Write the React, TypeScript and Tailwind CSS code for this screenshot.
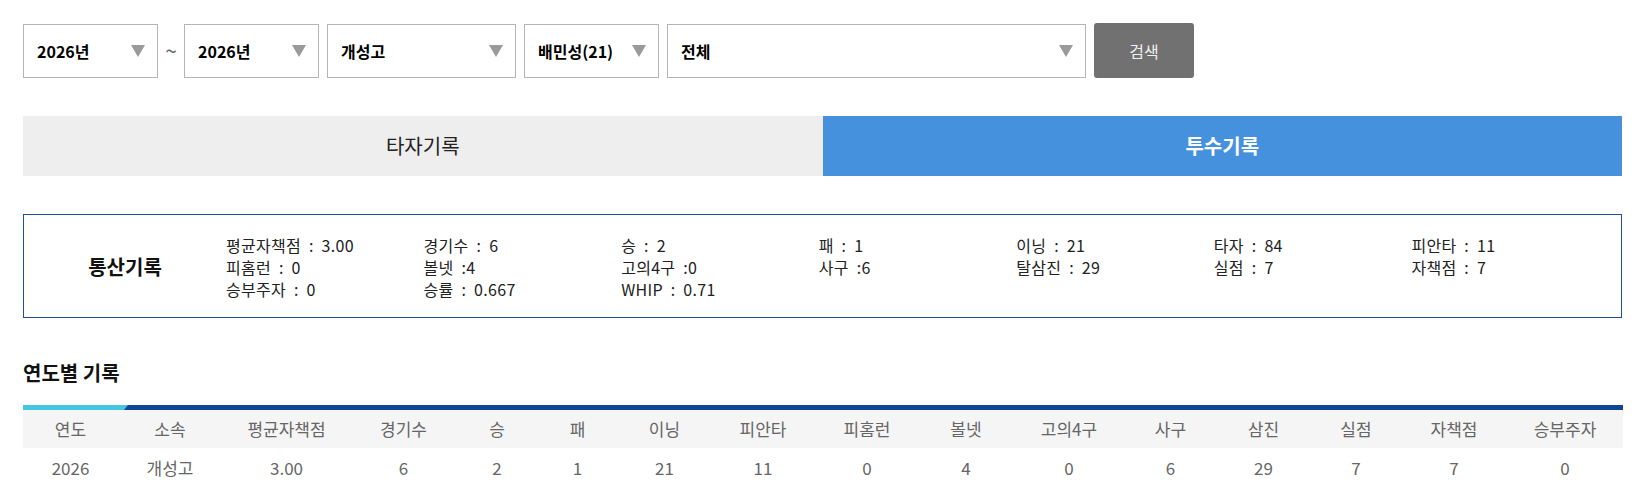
import React from "react";

const font = "font-['Malgun_Gothic','Noto_Sans_CJK_KR',sans-serif]";

const summary = [
  "평균자책점 : 3.00",
  "경기수 : 6",
  "승 : 2",
  "패 : 1",
  "이닝 : 21",
  "타자 : 84",
  "피안타 : 11",
  "피홈런 : 0",
  "볼넷 :4",
  "고의4구 :0",
  "사구 :6",
  "탈삼진 : 29",
  "실점 : 7",
  "자책점 : 7",
  "승부주자 : 0",
  "승률 : 0.667",
  "WHIP : 0.71",
];

const headers = [
  "연도",
  "소속",
  "평균자책점",
  "경기수",
  "승",
  "패",
  "이닝",
  "피안타",
  "피홈런",
  "볼넷",
  "고의4구",
  "사구",
  "삼진",
  "실점",
  "자책점",
  "승부주자",
];

const rows = [["2026", "개성고", "3.00", "6", "2", "1", "21", "11", "0", "4", "0", "6", "29", "7", "7", "0"]];

const cols =
  "grid grid-cols-[95px_104px_129px_105px_82px_79px_95px_102px_106px_92px_114px_89px_97px_88px_108px_114px]";

const Caret = () => (
  <svg width="14" height="12" viewBox="0 0 14 12" className="shrink-0">
    <polygon points="0,0 14,0 7,12" fill="#9a9a9a" />
  </svg>
);

const Select = ({ label, width }: { label: string; width: string }) => (
  <div
    className={`${width} h-[54px] flex items-center justify-between border border-[#b5b5b5] bg-white pl-[13px] pr-[12px]`}
  >
    <span className="text-[16px] font-bold text-black">{label}</span>
    <Caret />
  </div>
);

const App = () => {
  return (
    <div className={`${font} w-full h-[489px] bg-white pl-[23px] pt-[23px] overflow-hidden`}>
      <div className="w-[1599px]">
        {/* search filters */}
        <div className="flex items-center gap-2">
          <Select label="2026년" width="w-[135px]" />
          <span className="flex w-[10px] justify-center text-[21px] leading-none text-[#666]">~</span>
          <Select label="2026년" width="w-[135px]" />
          <Select label="개성고" width="w-[189px]" />
          <Select label="배민성(21)" width="w-[135px]" />
          <Select label="전체" width="w-[419px]" />
          <button className="w-[100px] h-[55px] rounded-[3px] bg-[#717171] text-[16px] text-[#f0f0f0]">
            검색
          </button>
        </div>

        {/* record tabs */}
        <div className="mt-[38px] flex h-[60px]">
          <div className="flex-1 flex items-center justify-center bg-[#eeeeee] text-[20px] text-[#222]">
            타자기록
          </div>
          <div className="flex-1 flex items-center justify-center bg-[#4591dd] text-[20px] font-bold text-white">
            투수기록
          </div>
        </div>

        {/* career totals */}
        <div className="mt-[38px] flex items-center border border-[#1f4e9c] pt-[19px] pb-[17px]">
          <div className="w-[202px] text-center text-[20px] font-bold text-[#111]">통산기록</div>
          <div className="grid w-[1383px] grid-cols-7 text-[16px] leading-[22px] tracking-[0.3px] text-[#222] [word-spacing:4px]">
            {summary.map((s) => (
              <span key={s} className="block h-[22px]">
                {s}
              </span>
            ))}
          </div>
        </div>

        <h3 className="mt-[41px] text-[20px] font-bold leading-[28px] text-[#111]">연도별 기록</h3>

        {/* yearly table */}
        <div className="mt-[18px] flex h-[5px] w-[1600px] bg-[#0d4597]">
          <div className="h-full w-[105px] bg-[#46c5e1] [clip-path:polygon(0_0,100%_0,calc(100%-4px)_100%,0_100%)]" />
        </div>
        <div className={`${cols} h-[38px] w-[1600px] items-center bg-[#f5f5f5] text-center text-[17px] text-[#666]`}>
          {headers.map((h) => (
            <span key={h}>{h}</span>
          ))}
        </div>
        {rows.map((r, i) => (
          <div key={i} className={`${cols} h-[40px] w-[1600px] items-center text-center text-[17px] text-[#666]`}>
            {r.map((c, j) => (
              <span key={j}>{c}</span>
            ))}
          </div>
        ))}
      </div>
    </div>
  );
};

export default App;
